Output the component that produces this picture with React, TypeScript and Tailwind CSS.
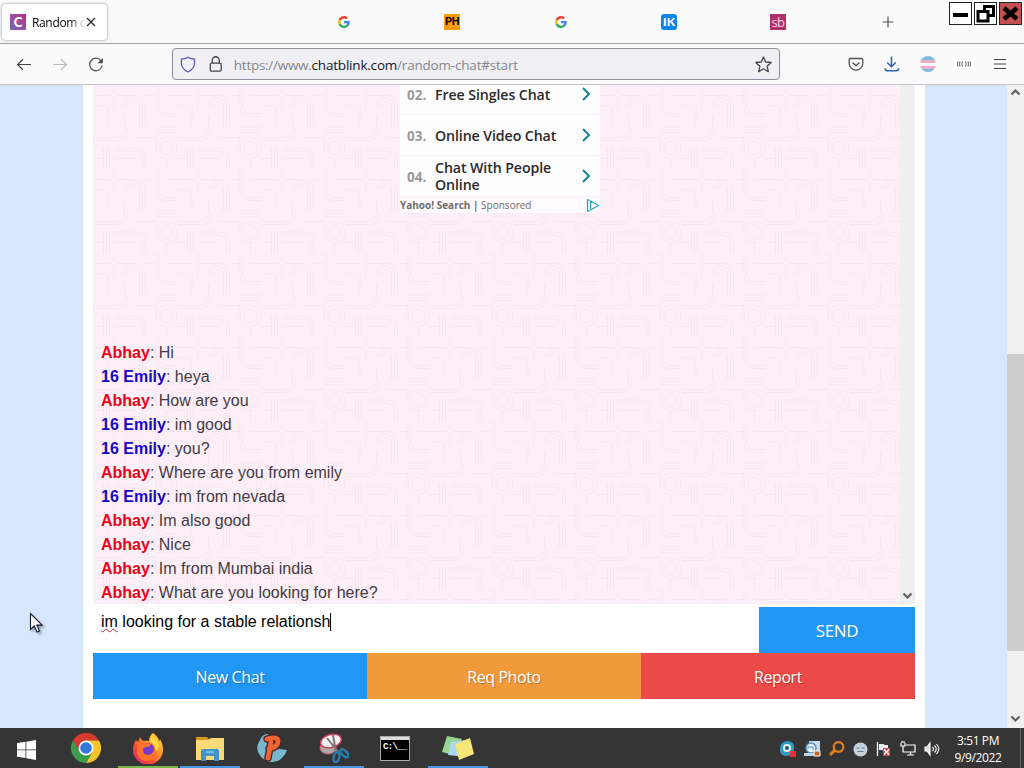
import React from "react";

const UI = "font-['Open_Sans','Noto_Sans',sans-serif]";
const ARIAL = "font-['Liberation_Sans',Arial,sans-serif]";

function GoogleIcon() {
  return (
    <svg width="12" height="12" viewBox="0 0 48 48">
      <path fill="#EA4335" d="M24 9.5c3.5 0 6.700 1.200 9.200 3.600l6.900-6.900C35.900 2.400 30.500 0 24 0 14.600 0 6.500 5.400 2.600 13.200l8 6.200C12.400 13.700 17.700 9.500 24 9.500z" />
      <path fill="#4285F4" d="M47 24.500c0-1.600-.2-3.100-.4-4.500H24v9h12.900c-.6 3-2.300 5.500-4.800 7.200l7.700 6C44.400 38 47 32 47 24.500z" />
      <path fill="#FBBC05" d="M10.500 28.600c-.5-1.500-.8-3-.8-4.600s.3-3.100.8-4.600l-8-6.200C.9 16.500 0 20.100 0 24s.9 7.500 2.600 10.800z" />
      <path fill="#34A853" d="M24 48c6.500 0 11.900-2.100 15.900-5.800l-7.700-6c-2.200 1.500-4.900 2.300-8.200 2.300-6.300 0-11.600-4.200-13.500-9.900l-8 6.200C6.500 42.600 14.600 48 24 48z" />
    </svg>
  );
}

function Chevron({ up = false }: { up?: boolean }) {
  return (
    <svg width="11" height="8" viewBox="0 0 11 8" className={up ? "rotate-180" : ""}>
      <path d="M1.500 1.500 5.500 5.500 9.500 1.500" fill="none" stroke="#606060" strokeWidth="2.200" />
    </svg>
  );
}

function TabStrip() {
  return (
    <div className="flex h-[44px] shrink-0 border-b border-[#a0a0a4] bg-[#fafafa]">
      <div className="mt-[4px] ml-[2px] flex h-[36px] w-[105px] items-center rounded-[4px] bg-white pl-[8px] shadow-[0_0_3px_rgba(0,0,0,0.45)]">
        <div className="flex size-4 shrink-0 items-center justify-center bg-linear-to-tr from-[#7068b5] to-[#b9208c] font-[Lato,sans-serif] text-[13px] leading-4 font-black text-white">C</div>
        <div className={`ml-[6px] w-[54px] shrink-0 bg-linear-to-r from-black from-65% to-[#e4e4e4] to-95% bg-clip-text pt-[2px] text-[12px] tracking-[-0.35px] whitespace-nowrap text-transparent ${UI}`}>Random c</div>
        <svg className="shrink-0" width="10" height="10" viewBox="0 0 10 10"><path d="M1 1 9 9M9 1 1 9" stroke="#222" strokeWidth="1.200" /></svg>
      </div>
      <div className="ml-[231px] flex h-[44px] w-[611px] shrink-0 items-center">
        <div className="w-[106px]"><GoogleIcon /></div>
        <div className="w-[111px]"><div className="flex h-4 w-4 items-center justify-center bg-[#ff9c0d] font-[Roboto,sans-serif] text-[11px] font-bold tracking-[-0.4px] text-black">PH</div></div>
        <div className="w-[106px]"><GoogleIcon /></div>
        <div className="w-[109px]"><div className="flex size-4 items-center justify-center rounded-[3px] bg-[#0b84ec] font-[Lato,sans-serif] text-[12px] font-black text-white">IK</div></div>
        <div className="w-[112px]"><div className={`flex size-4 items-center justify-center bg-[#b0306a] pb-px text-[13px] leading-4 tracking-[-0.5px] text-[#f5d5e5] ${UI}`}>sb</div></div>
        <svg width="12" height="12" viewBox="0 0 12 12"><path d="M6 .5v11M.5 6h11" stroke="#555" strokeWidth="1.200" /></svg>
      </div>
      <div className="mt-[2px] flex h-[23px] shrink-0 gap-[2px]">
        <div className="flex w-[23px] items-center justify-center border border-[#222] bg-white"><div className="mt-[3px] h-[4px] w-[15px] bg-black" /></div>
        <div className="flex w-[23px] items-center justify-center border border-[#222] bg-white">
          <svg width="19" height="19" viewBox="0 0 19 19" fill="none" stroke="#000" strokeWidth="3"><path d="M2 7.500h10v9.500H2zM8.500 7V2.500h9v9H13" /></svg>
        </div>
        <div className="flex w-[23px] items-center justify-center border border-[#222] bg-[#c2504f]">
          <svg width="17" height="17" viewBox="0 0 17 17" stroke="#000" strokeWidth="4.600"><path d="M2 3 15 14M15 3 2 14" /></svg>
        </div>
      </div>
    </div>
  );
}

function Toolbar() {
  return (
    <div className="flex h-[41px] shrink-0 items-center border-b border-[#c4c4c8] bg-[#fafafa] pl-4">
      <svg width="16" height="16" viewBox="0 0 16 16" fill="none" stroke="#454545" strokeWidth="1.200"><path d="M15 8.500H1.800M7 3.300 1.500 8.500 7 13.700" /></svg>
      <svg className="ml-5" width="16" height="16" viewBox="0 0 16 16" fill="none" stroke="#bcbcbc" strokeWidth="1.200"><path d="M1 8.500h13.200M9 3.300l5.500 5.200L9 13.700" /></svg>
      <svg className="ml-5" width="16" height="16" viewBox="0 0 16 16" fill="none" stroke="#555" strokeWidth="1.300"><path d="M13.300 5A6.300 6.300 0 1 0 14.200 9.500" /><path d="M14.800 2v5.200H9.600z" fill="#454545" stroke="none" /></svg>
      <div className="ml-[68px] flex h-8 w-[608px] items-center rounded-[4px] border border-[#8f8f9d] bg-[#f0f0f4] pl-[7px]">
        <svg width="16" height="17" viewBox="0 0 16 17" fill="none" stroke="#5751c8" strokeWidth="1.200"><path d="M8 1.200C10 2.500 12.500 3.100 14.600 3.100V7c0 4.500-3 7.300-6.600 9C4.400 14.300 1.400 11.500 1.400 7V3.100C3.500 3.100 6 2.500 8 1.200z" /></svg>
        <svg className="ml-[13px]" width="14" height="16" viewBox="0 0 14 16" fill="none" stroke="#454545" strokeWidth="1.300"><rect x="1.300" y="7.200" width="11" height="8" rx="1.500" /><path d="M3.300 7V4.200a3.500 3.500 0 0 1 7 0V7" /></svg>
        <div className={`ml-[11px] w-[524px] pt-[2px] text-[13.500px] whitespace-nowrap text-[#85858b] ${UI}`}><span className="tracking-[-0.27px]">https://www.</span><span className="tracking-[-0.2px] text-[#15141a]">chatblink.com</span><span className="tracking-[-0.2px]">/random-chat#start</span></div>
        <svg width="17" height="17" viewBox="0 0 17 17" className="mr-[7px] shrink-0" fill="none" stroke="#454545" strokeWidth="1.300" strokeLinejoin="round"><path d="m8.500 1 2.200 5 5.500.5-4.100 3.700 1.200 5.500-4.800-2.900-4.800 2.900 1.200-5.500L.8 6.500 6.300 6z" /></svg>
      </div>
      <svg className="ml-[68px]" width="16" height="16" viewBox="0 0 16 16" fill="none" stroke="#505050" strokeWidth="1.300"><path d="M1.200 3.800Q1.200 2.500 2.500 2.500h11q1.300 0 1.300 1.300V7.300A6.800 6.800 0 0 1 1.200 7.300z" /><path d="m4.500 6.500 3.500 3.300 3.500-3.300" /></svg>
      <svg className="ml-5" width="16" height="16" viewBox="0 0 16 16" fill="none" stroke="#2762bd" strokeWidth="1.500"><path d="M7.500.5v10M3.200 6.500l4.300 4.200 4.300-4.200M1.200 12.200q0 2.500 2 2.500h9.200q2.200 0 2.200-2.500" /></svg>
      <div className="ml-5 flex size-4 flex-col overflow-hidden rounded-full">
        <div className="h-[4px] bg-[#79bde5]" /><div className="h-[3px] bg-[#efabc5]" /><div className="h-[3px] bg-white" /><div className="h-[3px] bg-[#efabc5]" /><div className="h-[3px] bg-[#79bde5]" />
      </div>
      <svg className="ml-5" width="16" height="8" viewBox="0 0 16 8" fill="none" stroke="#666" strokeWidth="1"><path d="M2 1.500Q1 4 2 6.500M4 1.500Q3 4 4 6.500M6.500 1.500Q5 4 6.500 6.500M9.500 1.500Q11 4 9.500 6.500M12 1.500Q13 4 12 6.500M14 1.500Q15 4 14 6.500" /></svg>
      <svg className="ml-[21px]" width="14" height="12" viewBox="0 0 14 12" stroke="#454545" strokeWidth="1.200"><path d="M1 1.500h12M1 6h12M1 10.500h12" /></svg>
    </div>
  );
}

function AdRow({ n, className, children }: { n: string; className: string; children: React.ReactNode }) {
  return (
    <div className={`flex shrink-0 items-center border-b border-[#f8f4f7] bg-[#fefdfe] pl-[7px] ${className}`}>
      <span className="w-7 pt-[3px] text-[13.500px] font-bold text-[#999]">{n}</span>
      <span className="w-[144px] text-[14.200px] leading-[17px] font-semibold tracking-[-0.1px] whitespace-nowrap text-[#2a2a2a]">{children}</span>
      <svg width="14" height="16" viewBox="0 0 14 16" fill="none" stroke="#14819d" strokeWidth="2"><path d="m4 2 6 6-6 6" /></svg>
    </div>
  );
}

function Ad() {
  return (
    <div className={`ml-[307px] flex w-[200px] flex-col ${UI}`}>
      <AdRow n="02." className="h-[30px] pb-[11px]">Free Singles Chat</AdRow>
      <AdRow n="03." className="h-[41px]">Online Video Chat</AdRow>
      <AdRow n="04." className="h-[41px]">Chat With People<br />Online</AdRow>
      <div className="flex h-4 items-center justify-between bg-[#fefafd] text-[10px] whitespace-nowrap text-[#6c6c6c]">
        <span><b>Yahoo! Search |</b> Sponsored</span>
        <svg width="14" height="13" viewBox="0 0 14 13" fill="none" stroke="#27a9b9" strokeWidth="1.300"><path d="M3.500 1H1.500v11h2M4.500 2l8 4.500-8 4.500z" /></svg>
      </div>
    </div>
  );
}

const messages: [string, string][] = [
  ["Abhay", "Hi"],
  ["16 Emily", "heya"],
  ["Abhay", "How are you"],
  ["16 Emily", "im good"],
  ["16 Emily", "you?"],
  ["Abhay", "Where are you from emily"],
  ["16 Emily", "im from nevada"],
  ["Abhay", "Im also good"],
  ["Abhay", "Nice"],
  ["Abhay", "Im from Mumbai india"],
  ["Abhay", "What are you looking for here?"],
];

function Wallpaper() {
  return (
    <svg className="absolute inset-0 size-full" fill="none" stroke="#f6e5f2" strokeWidth="1.300">
      <defs>
        <pattern id="maze" width="112" height="112" patternUnits="userSpaceOnUse" patternTransform="scale(0.75)">
          <path d="M0 14h20q8 0 8 8v12M28 0v8q0 6 6 6h22M0 28h14q6 0 6 6v22M42 28a14 14 0 0 1 28 0v28M46 28a10 10 0 0 1 20 0v28M50 28a6 6 0 0 1 12 0v28M0 70h28q14 0 14-14V42M0 74h30q16 0 16-16M84 0v28q0 14 14 14h14M88 0v26q0 12 12 12h12M84 56h28M84 60h28M84 64h28M14 84v28M18 84v28M22 84v28M28 84h28q14 0 14 14v14M28 88h26q12 0 12 12v12M84 84a14 14 0 1 0 28 0 14 14 0 1 0-28 0M89 84a9 9 0 1 0 18 0 9 9 0 1 0-18 0M56 70h28v14M0 98h14M28 98h28M70 14h14M98 14h14M98 98v14" />
        </pattern>
      </defs>
      <rect width="100%" height="100%" fill="url(#maze)" stroke="none" />
    </svg>
  );
}

function ChatPanel() {
  return (
    <div className="flex h-[519px]">
      <div className="relative w-[807px] bg-[#fdeff8]">
        <Wallpaper />
        <div className="relative flex h-full flex-col justify-between">
          <Ad />
          <div className={`-mb-px pl-2 text-[16px] leading-6 text-[#423b43] ${ARIAL}`}>
            {messages.map(([who, text], i) => (
              <div key={i} className="h-6 whitespace-nowrap">
                <b className={who === "Abhay" ? "text-[#e4061a]" : "text-[#1508bf]"}>{who}</b>: {text}
              </div>
            ))}
          </div>
        </div>
      </div>
      <div className="flex w-[15px] items-end justify-center bg-[#f0eff0] pb-[4px]"><Chevron /></div>
    </div>
  );
}

const actions: [string, string][] = [
  ["New Chat", "bg-[#2196f3]"],
  ["Req Photo", "bg-[#f09a3c]"],
  ["Report", "bg-[#ec4a48]"],
];

function Page() {
  return (
    <div className="flex h-[643px] shrink-0 bg-[#d6e7fb]">
      <div className="w-[83px]">
        <svg className="mt-[527px] ml-[29px] drop-shadow-[2px_2px_1px_rgba(0,0,0,0.3)]" width="15" height="22" viewBox="0 0 15 22"><path d="M1.500 1.500v16l3.800-3.500 2.600 6 2.500-1-2.500-5.900h5.200z" fill="#fff" stroke="#111827" strokeWidth="1.100" /></svg>
      </div>
      <div className="flex w-[842px] flex-col bg-white px-[10px]">
        <ChatPanel />
        <div className="flex h-[49px]">
          <div className={`flex w-[666px] items-start pt-[6px] pl-2 text-[16px] leading-6 text-black ${ARIAL}`}>
            <span><span className="underline decoration-[#c2253f] decoration-wavy decoration-1 underline-offset-[1px] [text-decoration-skip-ink:none]">im</span> looking for a stable relationsh</span>
            <span className="mt-[3px] h-[18px] w-px bg-black" />
          </div>
          <div className={`mt-[3px] flex w-[156px] items-center justify-center bg-[#2196f3] pt-px text-[17px] font-medium tracking-[-0.3px] text-white ${UI}`}>SEND</div>
        </div>
        <div className="flex h-[46px]">
          {actions.map(([label, bg]) => (
            <div key={label} className={`flex w-[274px] items-center justify-center pt-[2px] text-[16px] tracking-[-0.4px] text-white [text-shadow:1px_1px_1px_rgba(0,0,0,0.25)] ${bg} ${UI}`}>{label}</div>
          ))}
        </div>
      </div>
      <div className="w-[82px]" />
      <div className="flex w-[17px] flex-col items-center bg-[#f0f0f1]">
        <div className="flex h-[269px] pt-[3px]"><Chevron up /></div>
        <div className="h-[297px] w-full bg-[#cdcdcd]" />
        <div className="pt-[64px]"><Chevron /></div>
      </div>
    </div>
  );
}

function TaskItem({ bar, children }: { bar?: string; children: React.ReactNode }) {
  return (
    <div className="flex w-[62px] shrink-0 flex-col items-center">
      <div className="flex h-[38px] items-center pt-[2px]">{children}</div>
      {bar && <div className={`h-[2px] w-[60px] ${bar}`} />}
    </div>
  );
}

function Taskbar() {
  return (
    <div className="flex h-10 shrink-0 bg-[#353535]">
      <div className="flex w-[55px] shrink-0 items-center pt-[3px] pl-[17px]">
        <svg width="19" height="20" viewBox="0 0 19 20" fill="#fff"><path d="M0 3 8.500 1.800v7.700H0zM9.300 1.700 19 0v9.500H9.300zM0 10.300h8.500V18L0 16.800zM9.300 10.300H19V20l-9.700-1.700z" /></svg>
      </div>
      <TaskItem>
        <svg width="30" height="30" viewBox="0 0 30 30">
          <path d="M2 7.500A15 15 0 0 1 28 7.500H15L8.500 19z" fill="#d83b2f" />
          <path d="M28 7.500A15 15 0 0 1 15 30l6.500-11.200L15 7.500z" fill="#f5c52b" />
          <path d="M15 30A15 15 0 0 1 2 7.500l6.500 11.300L15 22l5-1z" fill="#3c9d4d" />
          <circle cx="15" cy="15" r="7.500" fill="#fff" /><circle cx="15" cy="15" r="5.800" fill="#3276db" />
        </svg>
      </TaskItem>
      <TaskItem bar="bg-[#79b648]">
        <svg width="30" height="31" viewBox="0 0 30 31">
          <defs>
            <linearGradient id="fox" x1="1" y1="0" x2="0" y2="1"><stop offset="0" stopColor="#fff44f" /><stop offset=".35" stopColor="#ff9a28" /><stop offset=".7" stopColor="#fa4439" /><stop offset="1" stopColor="#e31587" /></linearGradient>
          </defs>
          <path d="M20 0q6 4 6 9l1-3q3 5 3 10A15 15 0 0 1 0 17q0-6 3-10l2 2 2-5q1 3 4 4 3-1 5 0 0-5 4-8z" fill="url(#fox)" />
          <circle cx="14.800" cy="16.500" r="6.500" fill="#743bc4" />
          <path d="M4 10q5-3 9 0l5 1q-1 3-5 3-4 1-3 4 1 4 5 4 6-1 6-7 5 10-6 13Q7 29 4 21z" fill="#ff702d" />
          <path d="M17 9q6 2 6 9 5-4 1-10-4-3-5-7z" fill="#ffdc40" />
        </svg>
      </TaskItem>
      <TaskItem bar="bg-[#4695e2]">
        <svg width="28" height="26" viewBox="0 0 28 26">
          <path d="M0 2h11l3 3H0z" fill="#d79a1d" /><path d="M0 5h12l3-2h13v22H0z" fill="#fada78" />
          <path d="M5 16q0-2 2-2h14q2 0 2 2v10h-5v-5h-8v5H5z" fill="#4193cc" /><path d="M10 17h8" stroke="#8bc8e8" strokeWidth="1.500" />
        </svg>
      </TaskItem>
      <TaskItem>
        <svg width="32" height="32" viewBox="0 0 32 32">
          <path d="M12 2Q6 2 4 8-1 15 3 22q4 7 12 8 7 0 11-4 4-4 5-8l-8-1-8 3V8z" fill="#79b9cf" />
          <g strokeLinejoin="round" strokeLinecap="round" fill="none"><path d="M12 26 15 10M11 7q11-3 11 2 0 6-9 8" stroke="#4f251f" strokeWidth="7.500" /><path d="M12 26 15 10M11 7q11-3 11 2 0 6-9 8" stroke="#f06434" strokeWidth="4.800" /></g>
        </svg>
      </TaskItem>
      <TaskItem bar="bg-[#4695e2]">
        <svg width="30" height="30" viewBox="0 0 30 30">
          <ellipse cx="9" cy="15" rx="8" ry="6" fill="#aaa" stroke="#cc6476" />
          <ellipse cx="12" cy="8" rx="10.500" ry="6.500" transform="rotate(-15 12 8)" fill="#f4f2f2" stroke="#cf4458" strokeWidth="1.500" />
          <path d="m8 5 12 15M14 2l3 17" stroke="#777" strokeWidth="2" />
          <g fill="none" stroke="#277bab" strokeWidth="2.500"><ellipse cx="17.500" cy="24" rx="2.700" ry="5" transform="rotate(15 17 24)" /><ellipse cx="25" cy="20.500" rx="2.500" ry="5" transform="rotate(-48 25 20)" /></g>
        </svg>
      </TaskItem>
      <TaskItem>
        <div className="mr-[2px] flex h-[25px] w-[30px] flex-col border border-[#aaa] bg-black">
          <div className="h-[3px] shrink-0 bg-[#ddd]" />
          <span className="pt-[2px] pl-[2px] font-['Liberation_Mono',monospace] text-[9px] leading-[11px] font-bold tracking-[-0.7px] whitespace-nowrap text-white">C:\__</span>
        </div>
      </TaskItem>
      <TaskItem bar="bg-[#4695e2]">
        <svg width="32" height="26" viewBox="0 0 32 26">
          <path d="m5 1 15 3-5 17-15-4z" fill="#97d592" /><path d="m9 7 17-2-2 17-18-2z" fill="#a9d7ed" /><path d="m13 9 15-6 4 16-15 6z" fill="#f8e577" />
        </svg>
      </TaskItem>
      <div className="flex w-[456px] shrink-0 items-center justify-end gap-[8px] pt-[2px] pr-[5px]">
        <svg width="16" height="16" viewBox="0 0 16 16"><path d="M0 7Q1 0 8 0q7 1 6 7 0 8-8 8-7-1-6-8z" fill="#3299c2" /><circle cx="7" cy="7" r="4" fill="#e6f2f4" /><circle cx="7" cy="7" r="2" fill="#205572" /><path d="M10 10h6v6h-6z" fill="#e8303b" /></svg>
        <svg width="17" height="16" viewBox="0 0 17 16"><path d="M5 0h11v12H5z" fill="#cadce7" /><circle cx="7" cy="7" r="5" fill="#e9f4fa" stroke="#508bc1" strokeWidth="1.500" /><path d="M4 8V6h5v3" fill="none" stroke="#508bc1" /><path d="M0 12h10v3H0z" fill="#bad5e8" /><path d="M10 10h6v5h-6z" fill="#bd6928" stroke="#fff" /></svg>
        <svg width="16" height="16" viewBox="0 0 16 16" fill="none" stroke="#e97f18"><circle cx="9.500" cy="6" r="4.800" strokeWidth="2.200" /><path d="m6 9-5 5" strokeWidth="3" /></svg>
        <svg width="15" height="15" viewBox="0 0 15 15"><circle cx="7.500" cy="7.500" r="7" fill="#c6d2e0" /><path d="M3.500 6h3M8.500 6h3M4.500 9.500h6" stroke="#69788c" strokeWidth="1.200" /></svg>
        <svg width="16" height="16" viewBox="0 0 16 16"><path d="M1.500 1v14" stroke="#fff" strokeWidth="1.300" /><path d="M3 3h4l2 1h3v6H8L6 9H3z" fill="#eee" /><path d="M7 7h7v8H7z" fill="#d94a50" /><path d="m8 8.500 5 5m0-5-5 5" stroke="#fff" strokeWidth="1.400" /></svg>
        <svg width="16" height="16" viewBox="0 0 16 16" fill="none" stroke="#fff" strokeWidth="1.200"><path d="M6 4h9v7H5M7 14h7M10.500 11v3M1 2v3h4V2M3 5v6h2M2 0v2M4 0v2" /></svg>
        <svg width="16" height="16" viewBox="0 0 16 16" fill="none" stroke="#fff" strokeWidth="1.100"><path d="M1 6v4h2l3 4V2L3 6z" fill="#ddd" /><path d="M8.500 6q2 2 0 4M10.500 4.500q3.500 3.500 0 7M12.500 3q4.500 5 0 10" /></svg>
      </div>
      <div className={`flex w-[75px] shrink-0 flex-col items-center pt-[4px] pr-[9px] text-[12px] leading-[17px] tracking-[-0.4px] whitespace-nowrap text-white ${UI}`}><span>3:51 PM</span><span>9/9/2022</span></div>
      <div className="w-px bg-[#666]" />
    </div>
  );
}

export default function App() {
  return (
    <div className="flex h-[768px] w-[1024px] flex-col overflow-hidden">
      <TabStrip />
      <Toolbar />
      <Page />
      <Taskbar />
    </div>
  );
}
